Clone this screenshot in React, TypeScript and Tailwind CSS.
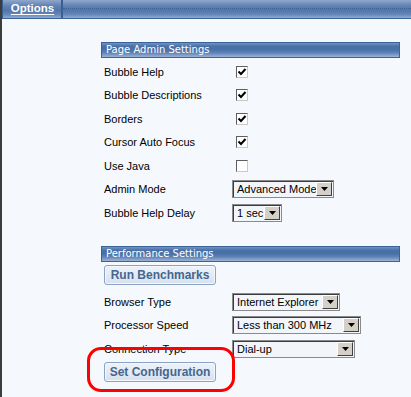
import React from "react";

const headerBg =
  "bg-[linear-gradient(to_bottom,#7592c0_0%,#4a72a9_22%,#4670a8_45%,#5f82b6_70%,#9cb4d7_100%)]";

const SectionHeader = ({ title }: { title: string }) => (
  <div
    className={`h-[16px] border border-[#3a6398] ${headerBg} flex items-center pl-[4px] text-white text-[10px] leading-none font-['DejaVu_Sans',Verdana,sans-serif]`}
  >
    {title}
  </div>
);

const Check = ({ checked }: { checked: boolean }) => (
  <span className="ml-[4px] w-[12px] h-[12px] bg-white border border-t-[#5e5e5e] border-l-[#5e5e5e] border-r-[#c9c9c9] border-b-[#c9c9c9] flex items-center justify-center">
    {checked && (
      <svg width="10" height="10" viewBox="0 0 10 10">
        <path d="M1.5 4.5 L4 7 L8.5 2" fill="none" stroke="#000" strokeWidth="2" />
      </svg>
    )}
  </span>
);

const Select = ({ value, width }: { value: string; width: string }) => (
  <span
    className={`${width} h-[18px] flex items-stretch bg-[#f2f5fa] border border-[#8a8a8a] shadow-[inset_1px_1px_0_#3c3c3c]`}
  >
    <span className="flex-1 flex items-center pl-[4px] pt-[1px] text-[11px] leading-none whitespace-nowrap overflow-hidden">
      {value}
    </span>
    <span className="w-[16px] my-[1px] mr-[1px] bg-[#d4d0c8] border border-t-white border-l-white border-r-[#404040] border-b-[#404040] flex items-center justify-center">
      <svg width="7" height="4" viewBox="0 0 7 4">
        <path d="M0 0 H7 L3.5 4 Z" fill="#000" />
      </svg>
    </span>
  </span>
);

const Row = ({ label, children }: { label: string; children?: React.ReactNode }) => (
  <div className="h-[23.5px] flex items-center">
    <span className="w-[131px] pl-[3px] whitespace-nowrap">{label}</span>
    <span className="flex items-center">{children}</span>
  </div>
);

const Button = ({ children }: { children: React.ReactNode }) => (
  <button className="h-[20px] w-[112px] ml-[3px] rounded-[3px] border border-[#8aa3c5] bg-[linear-gradient(to_bottom,#eef3fa,#d6e1ef)] shadow-[inset_0_0_0_1px_#f4f8fc] text-[12px] font-bold text-[#44668f] leading-none flex items-center justify-center">
    {children}
  </button>
);

export default function App() {
  return (
    <div className="relative w-[411px] h-[397px] overflow-hidden bg-[#f5f9fe] border-l-2 border-[#3c3c3c] font-['Liberation_Sans',Arial,sans-serif] text-[11px] text-black">
      {/* tab bar */}
      <div className="h-[19px] flex border-b border-[#3a6398] bg-[linear-gradient(to_bottom,#8fa8cc_0%,#6584b4_30%,#5076aa_55%,#6485b7_80%,#93abcf_100%)]">
        <div className="w-[61px] flex items-center justify-center border-l border-r-2 border-l-[#3a5f92] border-r-[#3a5f92]">
          <span className="text-white font-bold text-[11.5px] underline underline-offset-2 leading-none pl-[1px]">
            Options
          </span>
        </div>
        <div className="flex-1 flex items-start pt-[8px]">
          <div className="w-full border-t border-dotted border-[#3d6296]" />
        </div>
      </div>

      <div className="pl-[99px] pt-[23px] w-[398px]">
        <SectionHeader title="Page Admin Settings" />
        <div className="mt-[2px]">
          <Row label="Bubble Help">
            <Check checked />
          </Row>
          <Row label="Bubble Descriptions">
            <Check checked />
          </Row>
          <Row label="Borders">
            <Check checked />
          </Row>
          <Row label="Cursor Auto Focus">
            <Check checked />
          </Row>
          <Row label="Use Java">
            <Check checked={false} />
          </Row>
          <Row label="Admin Mode">
            <Select value="Advanced Mode" width="w-[102px]" />
          </Row>
          <Row label="Bubble Help Delay">
            <Select value="1 sec" width="w-[50px]" />
          </Row>
        </div>

        <div className="mt-[21.5px]">
          <SectionHeader title="Performance Settings" />
          <div className="mt-[3px]">
            <Button>Run Benchmarks</Button>
          </div>
          <div className="mt-[5px]">
            <Row label="Browser Type">
              <Select value="Internet Explorer" width="w-[108px]" />
            </Row>
            <Row label="Processor Speed">
              <Select value="Less than 300 MHz" width="w-[129px]" />
            </Row>
            <Row label="Connection Type">
              <Select value="Dial-up" width="w-[123px]" />
            </Row>
          </div>
          <div className="mt-[1.5px]">
            <Button>Set Configuration</Button>
          </div>
        </div>
      </div>

      {/* annotation */}
      <div className="absolute left-[85px] top-[347px] w-[148px] h-[45px] border-[3px] border-[#ff0000] rounded-[14px]" />
    </div>
  );
}
